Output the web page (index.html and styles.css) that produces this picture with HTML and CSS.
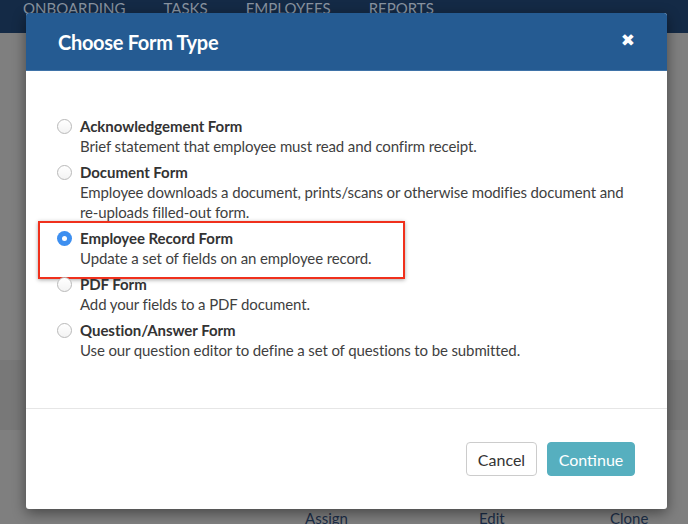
FILE: index.html
```html
<!DOCTYPE html>
<html>
<head>
<meta charset="utf-8">
<link rel="stylesheet" href="styles.css">
</head>
<body>
<div class="page">
  <nav class="nav">
    <span>Onboarding</span>
    <span>Tasks</span>
    <span>Employees</span>
    <span>Reports</span>
  </nav>
  <div class="backdrop-area">
    <div class="band"></div>
    <div class="links">
      <span class="l-assign">Assign</span>
      <span class="l-edit">Edit</span>
      <span class="l-clone">Clone</span>
    </div>
  </div>
</div>

<div class="modal">
  <div class="modal-header">
    <h1>Choose Form Type</h1>
    <span class="close">&#x2716;</span>
  </div>
  <div class="modal-body">
    <div class="option">
      <span class="radio"></span>
      <div class="text">
        <div class="title">Acknowledgement Form</div>
        <div class="desc">Brief statement that employee must read and confirm receipt.</div>
      </div>
    </div>
    <div class="option">
      <span class="radio"></span>
      <div class="text">
        <div class="title">Document Form</div>
        <div class="desc">Employee downloads a document, prints/scans or otherwise modifies document and re-uploads filled-out form.</div>
      </div>
    </div>
    <div class="option highlighted">
      <span class="radio checked"></span>
      <div class="text">
        <div class="title">Employee Record Form</div>
        <div class="desc">Update a set of fields on an employee record.</div>
      </div>
    </div>
    <div class="option">
      <span class="radio"></span>
      <div class="text">
        <div class="title">PDF Form</div>
        <div class="desc">Add your fields to a PDF document.</div>
      </div>
    </div>
    <div class="option">
      <span class="radio"></span>
      <div class="text">
        <div class="title">Question/Answer Form</div>
        <div class="desc">Use our question editor to define a set of questions to be submitted.</div>
      </div>
    </div>
  </div>
  <div class="modal-footer">
    <button class="btn btn-cancel">Cancel</button>
    <button class="btn btn-continue">Continue</button>
  </div>
</div>
</body>
</html>
```
FILE: styles.css
```css
* { box-sizing: border-box; }
html, body {
  margin: 0;
  padding: 0;
  width: 688px;
  height: 524px;
  overflow: hidden;
  font-family: Lato, "Open Sans", sans-serif;
}
body { background: #7e7e7e; position: relative; }

.page {
  display: flex;
  flex-direction: column;
  height: 524px;
}
.nav {
  height: 33px;
  background: #142a46;
  display: flex;
  gap: 38px;
  padding-left: 23px;
  align-items: flex-start;
  overflow: hidden;
}
.nav span {
  text-transform: uppercase;
  color: #8893a0;
  font-size: 15px;
  letter-spacing: 0;
  margin-top: -2px;
  line-height: 20px;
}
.backdrop-area {
  flex: 1;
  display: flex;
  flex-direction: column;
  background: #7f7f7f;
}
.band {
  margin-top: 327px;
  height: 70px;
  background: #787878;
}
.links {
  margin-top: auto;
  height: 18px;
  position: relative;
  font-size: 15px;
  color: #1c2e48;
}
.links span { position: absolute; top: 3px; }
.l-assign { left: 305px; }
.l-edit { left: 479px; }
.l-clone { left: 610px; }

.modal {
  position: absolute;
  left: 26px;
  top: 13px;
  width: 641px;
  height: 496px;
  background: #fff;
  border-radius: 3px;
  box-shadow: 0 4px 14px rgba(0,0,0,0.45);
  display: flex;
  flex-direction: column;
  overflow: hidden;
}
.modal-header {
  height: 58px;
  background: #255b92;
  display: flex;
  align-items: center;
  justify-content: space-between;
  padding: 0 32px 0 32px;
  border-bottom: 1px solid #3f73a8;
}
.modal-header h1 {
  margin: 0;
  color: #fff;
  font-size: 20px;
  font-weight: 700;
  letter-spacing: -0.3px;
}
.close {
  color: #fff;
  font-size: 17px;
  font-weight: 700;
  font-family: "DejaVu Sans", sans-serif;
  margin-top: -4px;
  margin-right: 0;
}
.modal-body {
  padding: 45px 32px 0 31px;
  flex: 1;
  display: flex;
  flex-direction: column;
  gap: 6px;
  border-bottom: 1px solid #e6e6e6;
}
.option {
  display: flex;
  gap: 8px;
  align-items: flex-start;
  position: relative;
}
.radio {
  width: 15px;
  height: 15px;
  border-radius: 50%;
  border: 1px solid #b9b9b9;
  background: linear-gradient(#fff, #f3f3f3);
  margin-top: 3px;
  flex: none;
  position: relative;
}
.radio.checked {
  border: none;
  background: #3d8ff0;
}
.radio.checked::after {
  content: "";
  position: absolute;
  left: 5px;
  top: 5px;
  width: 5px;
  height: 5px;
  border-radius: 50%;
  background: #fff;
}
.text { font-size: 15px; line-height: 20px; }
.title { font-weight: 700; color: #333; letter-spacing: -0.05px; }
.desc { color: #3f3f3f; letter-spacing: -0.12px; }
.highlighted::after {
  content: "";
  position: absolute;
  left: -19px;
  top: -7px;
  width: 363px;
  height: 54px;
  border: 2px solid #f0301c;
  box-shadow: 0 1px 4px rgba(0,0,0,0.35);
  pointer-events: none;
}
.modal-footer {
  height: 100px;
  display: flex;
  justify-content: flex-end;
  align-items: flex-start;
  gap: 10px;
  padding: 33px 32px 0 0;
}
.btn {
  height: 34px;
  font-family: Lato, sans-serif;
  font-size: 16px;
  border-radius: 4px;
  padding: 0;
}
.btn-cancel {
  width: 71px;
  background: #fff;
  color: #333;
  border: 1px solid #cccccc;
}
.btn-continue {
  width: 88px;
  background: #56afbf;
  color: #fff;
  border: 1px solid #56afbf;
}
```
